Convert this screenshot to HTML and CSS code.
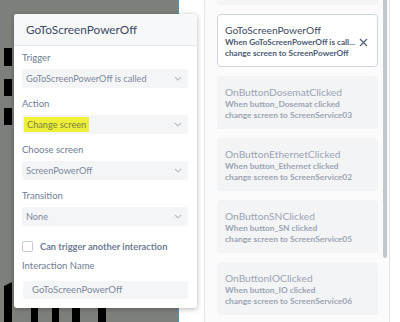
FILE: index.html
```html
<!DOCTYPE html>
<html lang="en">
<head>
    <meta charset="UTF-8">
    <title>Interactions</title>
    <link rel="stylesheet" href="styles.css">
</head>
<body>
    <!-- canvas with the screen preview -->
    <div class="canvas">
        <div class="widget" style="left: 4px; top: 48px; width: 8px; height: 18px;"></div>
        <div class="widget" style="left: 4px; top: 79px; width: 8px; height: 17px;"></div>
        <div class="widget" style="left: 4px; top: 108px; width: 8px; height: 17px;"></div>
        <div class="widget slant" style="left: 4px; top: 282px; width: 8px; height: 40px;"></div>
        <div class="widget" style="left: 31px; top: 290px; width: 7px; height: 32px;"></div>
        <div class="widget" style="left: 52px; top: 290px; width: 7px; height: 32px;"></div>
        <div class="widget" style="left: 72px; top: 290px; width: 8px; height: 32px;"></div>
        <div class="widget" style="left: 98px; top: 290px; width: 8px; height: 32px;"></div>

        <!-- interaction editor -->
        <div class="popup">
            <div class="popup-head">GoToScreenPowerOff</div>
            <div class="popup-body">
                <div class="field">
                    <div class="label">Trigger</div>
                    <div class="select"><span>GoToScreenPowerOff is called</span><svg class="chev" width="8" height="5" viewBox="0 0 8 5"><path d="M1 1l3 3 3-3" fill="none" stroke="#b9c0ca" stroke-width="1.1"/></svg></div>
                </div>
                <div class="field">
                    <div class="label">Action</div>
                    <div class="select"><span class="marker">Change screen</span><svg class="chev" width="8" height="5" viewBox="0 0 8 5"><path d="M1 1l3 3 3-3" fill="none" stroke="#b9c0ca" stroke-width="1.1"/></svg></div>
                </div>
                <div class="field">
                    <div class="label">Choose screen</div>
                    <div class="select"><span>ScreenPowerOff</span><svg class="chev" width="8" height="5" viewBox="0 0 8 5"><path d="M1 1l3 3 3-3" fill="none" stroke="#b9c0ca" stroke-width="1.1"/></svg></div>
                </div>
                <div class="field">
                    <div class="label">Transition</div>
                    <div class="select"><span>None</span><svg class="chev" width="8" height="5" viewBox="0 0 8 5"><path d="M1 1l3 3 3-3" fill="none" stroke="#b9c0ca" stroke-width="1.1"/></svg></div>
                </div>
                <label class="check"><span class="box"></span>Can trigger another interaction</label>
                <div class="label">Interaction Name</div>
                <div class="name-input">GoToScreenPowerOff</div>
            </div>
        </div>
    </div>

    <div class="gap"></div>

    <!-- list of interactions -->
    <div class="panel">
        <div class="cards">
            <div class="card"></div>
            <div class="card active">
                <div class="card-title">GoToScreenPowerOff</div>
                <div class="card-line row"><span>When GoToScreenPowerOff is call...</span><svg class="close" width="9" height="9" viewBox="0 0 9 9"><path d="M1 1l7 7M8 1l-7 7" stroke="#56627a" stroke-width="1.3"/></svg></div>
                <div class="card-line">change screen to ScreenPowerOff</div>
            </div>
            <div class="card">
                <div class="card-title">OnButtonDosematClicked</div>
                <div class="card-line">When button_Dosemat clicked</div>
                <div class="card-line">change screen to ScreenService03</div>
            </div>
            <div class="card">
                <div class="card-title">OnButtonEthernetClicked</div>
                <div class="card-line">When button_Ethernet clicked</div>
                <div class="card-line">change screen to ScreenService02</div>
            </div>
            <div class="card">
                <div class="card-title">OnButtonSNClicked</div>
                <div class="card-line">When button_SN clicked</div>
                <div class="card-line">change screen to ScreenService05</div>
            </div>
            <div class="card">
                <div class="card-title">OnButtonIOClicked</div>
                <div class="card-line">When button_IO clicked</div>
                <div class="card-line">change screen to ScreenService06</div>
            </div>
            <div class="card"></div>
        </div>
        <div class="scroll">
            <div class="thumb"></div>
        </div>
    </div>
    <div class="edge"></div>
</body>
</html>
```

FILE: styles.css
```css
/* page */
body {
    margin: 0;
    width: 400px;
    height: 322px;
    overflow: hidden;
    display: flex;
    background: #ffffff;
    font-family: Lato, "Open Sans", sans-serif;
}

/* canvas on the left */
.canvas {
    position: relative;
    width: 178px;
    height: 322px;
    background: #7d807a;
    border-right: 1px dashed #2a9fe6;
    flex-shrink: 0;
}
.widget {
    position: absolute;
    background: #000000;
}
.slant {
    clip-path: polygon(0 4px, 100% 0, 100% 100%, 0 100%);
}

/* popup with the form */
.popup {
    position: absolute;
    left: 14px;
    top: 14px;
    width: 183px;
    height: 294px;
    background: #ffffff;
    border-radius: 3px;
    box-shadow: 0 1px 5px rgba(0, 0, 0, 0.3);
    overflow: hidden;
}
.popup-head {
    height: 31px;
    line-height: 31px;
    padding-left: 12px;
    background: #f7f8fa;
    border-bottom: 1px solid #e5e8ec;
    color: #3b4a60;
    font-size: 11.8px;
}
.popup-body {
    padding: 5px 9px 0 8px;
}
.field {
    margin-bottom: 9px;
}
.label {
    height: 14px;
    line-height: 14px;
    margin-bottom: 4px;
    color: #6f7d93;
    font-size: 9.5px;
}
.select {
    display: flex;
    align-items: center;
    height: 19px;
    padding: 0 6px 0 4px;
    background: #f4f5f7;
    border-radius: 3px;
    color: #7c889b;
    font-size: 9.2px;
}
.chev {
    margin-left: auto;
}
.marker {
    background: #eef037;
    color: #7c7f44;
    padding: 2px 3px;
    margin-left: -2px;
}
.check {
    display: flex;
    align-items: center;
    gap: 7px;
    margin-top: 13px;
    height: 14px;
    color: #6f7d93;
    font-size: 9.3px;
    font-weight: bold;
}
.check .box {
    width: 9px;
    height: 9px;
    border: 1px solid #c6ccd4;
    border-radius: 2px;
    background: #ffffff;
}
.check + .label {
    margin-top: 6px;
}
.name-input {
    margin-top: 8px;
    margin-left: 1px;
    height: 18px;
    line-height: 18px;
    padding-left: 9px;
    background: #f4f5f7;
    border-radius: 3px;
    color: #7c889b;
    font-size: 9.6px;
}

/* white strip between canvas and list */
.gap {
    width: 25px;
    flex-shrink: 0;
}

/* list of interactions */
.panel {
    display: flex;
    width: 184px;
    height: 322px;
    overflow: hidden;
    flex-shrink: 0;
    background: #fbfbfc;
    border-left: 1px solid #e3e6ea;
    border-right: 1px solid #e1e4e8;
}
.cards {
    width: 161px;
    margin: -48px 0 0 12px;
    display: flex;
    flex-direction: column;
    gap: 9px;
}
.card {
    height: 53px;
    flex-shrink: 0;
    box-sizing: border-box;
    padding: 9px 9px 0 8px;
    background: #f3f4f6;
    border-radius: 4px;
    color: #9ba4b2;
}
.card.active {
    background: #ffffff;
    border: 1px solid #cfd5dc;
    padding: 8px 9px 0 7px;
    color: #3e4b60;
}
.card-title {
    line-height: 14px;
    font-size: 10.2px;
}
.card-line {
    line-height: 10.5px;
    font-size: 8.4px;
    font-weight: bold;
    white-space: nowrap;
}
.card.active .card-line {
    color: #4a5a72;
    font-size: 8.2px;
}
.row {
    display: flex;
    align-items: center;
}
.close {
    margin-left: auto;
    flex-shrink: 0;
}

/* scrollbar */
.scroll {
    width: 4px;
    margin-left: 5px;
}
.thumb {
    height: 258px;
    background: #c3c8cf;
    border-radius: 0 0 2px 2px;
}
.edge {
    flex: 1;
}
```
